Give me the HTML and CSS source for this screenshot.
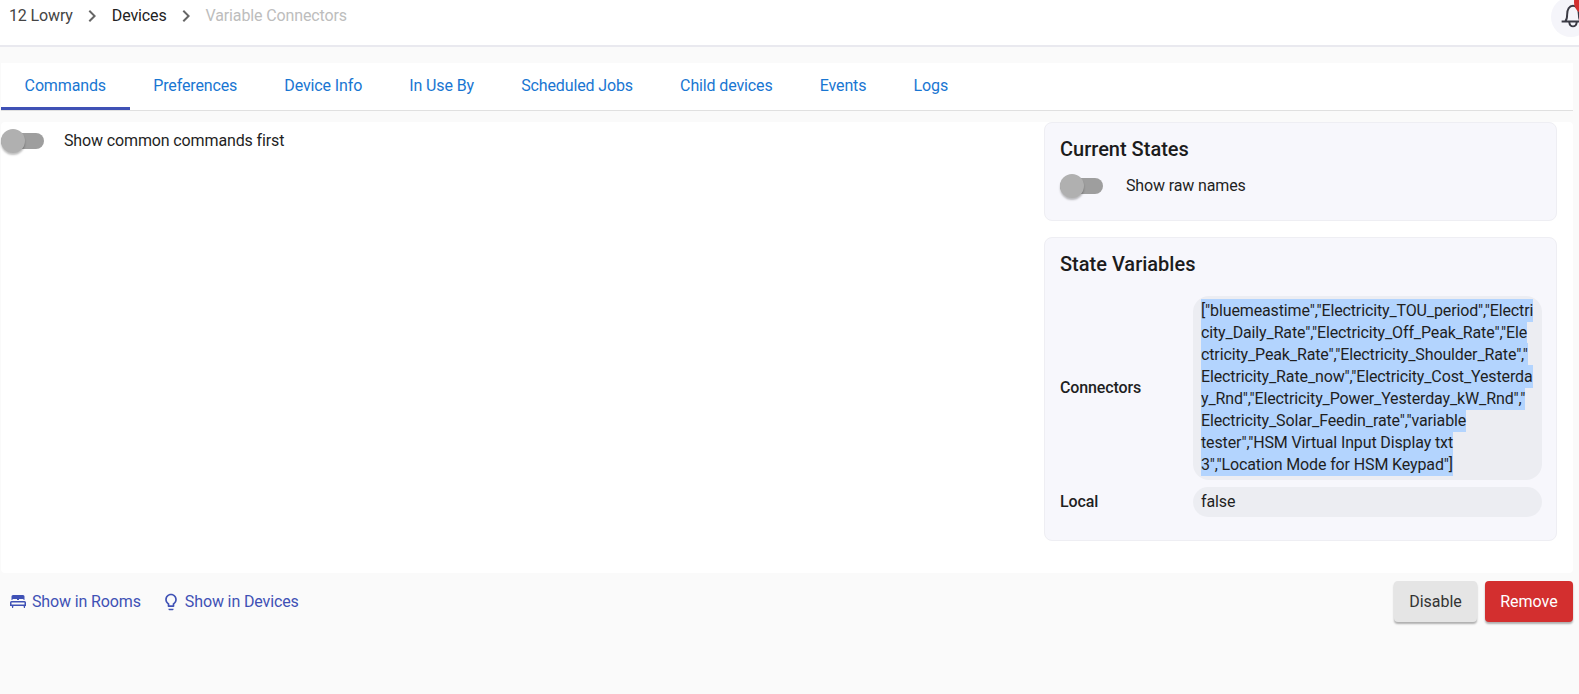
FILE: index.html
```html
<!DOCTYPE html>
<html lang="en">
<head>
<meta charset="utf-8">
<title>Variable Connectors</title>
<link rel="stylesheet" href="styles.css">
</head>
<body>
<header class="topbar">
  <nav class="crumbs">
    <span class="crumb-home">12 Lowry</span>
    <svg class="chev" viewBox="0 0 24 24"><path d="M10 6 8.59 7.41 13.17 12l-4.58 4.59L10 18l6-6z"/></svg>
    <span class="crumb-mid">Devices</span>
    <svg class="chev" viewBox="0 0 24 24"><path d="M10 6 8.59 7.41 13.17 12l-4.58 4.59L10 18l6-6z"/></svg>
    <span class="crumb-now">Variable Connectors</span>
  </nav>
  <div class="bell-wrap">
    <svg class="bell" viewBox="0 0 24 24"><path d="M5 17.500c1.600-1.600 1.600-3.500 1.600-6C6.600 7 8.500 3.500 12 3.500s5.400 3.500 5.400 8c0 2.500 0 4.400 1.600 6M1.500 18h21M8.500 18.500c.4 2.700 1.800 4 3.500 4s3.100-1.300 3.500-4"/></svg>
  </div>
  <span class="badge"></span>
</header>
<main class="page">
  <div class="tabs">
    <a class="tab tab-active">Commands</a>
    <a class="tab">Preferences</a>
    <a class="tab">Device Info</a>
    <a class="tab">In Use By</a>
    <a class="tab">Scheduled Jobs</a>
    <a class="tab">Child devices</a>
    <a class="tab">Events</a>
    <a class="tab">Logs</a>
  </div>
  <section class="panel">
    <div class="col-left">
      <label class="toggle-row">
        <span class="switch"><span class="knob"></span></span>
        <span>Show common commands first</span>
      </label>
    </div>
    <div class="col-right">
      <div class="card card-states">
        <h2>Current States</h2>
        <label class="toggle-row toggle-raw">
          <span class="switch"><span class="knob"></span></span>
          <span>Show raw names</span>
        </label>
      </div>
      <div class="card card-vars">
        <h2>State Variables</h2>
        <div class="vars">
          <div class="var-name">Connectors</div>
          <div class="var-value"><span class="selected">["bluemeastime","Electricity_TOU_period","Electricity_Daily_Rate","Electricity_Off_Peak_Rate","Electricity_Peak_Rate","Electricity_Shoulder_Rate","Electricity_Rate_now","Electricity_Cost_Yesterday_Rnd","Electricity_Power_Yesterday_kW_Rnd","<br>Electricity_Solar_Feedin_rate","variable tester","HSM Virtual Input Display txt 3","Location Mode for HSM Keypad"]</span></div>
          <div class="var-name">Local</div>
          <div class="var-value">false</div>
        </div>
      </div>
    </div>
  </section>
  <footer class="actions">
    <a class="link">
      <svg class="bed-icon" viewBox="0 0 16 13"><path d="M3 0h10a1.500 1.500 0 0 1 1.500 1.500V5h-1V4H9V5H7V4H2.500V5h-1V1.500A1.500 1.500 0 0 1 3 0z"/><path fill-rule="evenodd" d="M1.500 6h13A1.500 1.500 0 0 1 16 7.500V11h-.8l-.3 2h-1l-.3-2H3.400l-.3 2h-1l-.3-2H0V7.500A1.500 1.500 0 0 1 1.500 6zM1.500 7.500V9.500h13V7.500z"/></svg>
      Show in Rooms
    </a>
    <a class="link">
      <svg class="link-icon" viewBox="0 0 24 24"><path d="M9 21c0 .55.45 1 1 1h4c.55 0 1-.45 1-1v-1H9v1zm3-19C8.140 2 5 5.140 5 9c0 2.380 1.190 4.470 3 5.740V17c0 .55.45 1 1 1h6c.55 0 1-.45 1-1v-2.260c1.810-1.270 3-3.360 3-5.740 0-3.860-3.140-7-7-7zm2.850 11.100-.85.6V16h-4v-2.300l-.85-.6C7.800 12.160 7 10.630 7 9c0-2.760 2.240-5 5-5s5 2.240 5 5c0 1.630-.8 3.160-2.150 4.100z"/></svg>
      Show in Devices
    </a>
    <div class="buttons">
      <button class="btn btn-grey">Disable</button>
      <button class="btn btn-red">Remove</button>
    </div>
  </footer>
</main>
</body>
</html>
```
FILE: styles.css
```css
* { box-sizing: border-box; }
html, body { margin: 0; height: 100%; }
body {
  background: #fafafa;
  font-family: Roboto, "Liberation Sans", sans-serif;
  font-size: 16px;
  line-height: 22px;
  letter-spacing: -0.13px;
  color: #1f1f1f;
  overflow: hidden;
}
.topbar {
  height: 47px;
  background: #fff;
  border-bottom: 2px solid #e9e9ef;
  display: flex;
  justify-content: space-between;
  position: relative;
  overflow: hidden;
}
.crumbs { display: flex; align-items: center; height: 32px; padding-left: 9px; }
.crumb-home { color: #444; }
.crumb-mid { color: #222; }
.crumb-now { color: #bdbdbd; }
.chev { width: 24px; height: 24px; fill: #666; margin: 0 7.500px; }
.bell-wrap {
  position: absolute;
  left: 1551px;
  top: -3px;
  width: 40px;
  height: 40px;
  border-radius: 50%;
  background: #f5f5fa;
}
.bell { position: absolute; left: 9px; top: 5px; width: 26px; height: 26px; fill: none; stroke: #3a3a44; stroke-width: 1.800; }
.badge { position: absolute; left: 1574px; top: -11px; width: 26px; height: 26px; border-radius: 50%; background: #d32f2f; }
.page { padding: 16px 6px 0 1px; }
.tabs {
  display: flex;
  background: #fff;
  height: 48px;
  border-bottom: 1px solid #e0e0e0;
  align-items: stretch;
  margin-bottom: 11px;
}
.tab {
  display: flex;
  align-items: center;
  padding: 2px 23.600px 0;
  color: #1976d2;
  border-bottom: 3px solid transparent;
  height: 47px;
}
.tab-active { border-bottom-color: #3f51b5; }
.panel {
  display: flex;
  background: #fff;
  height: 451px;
  border-radius: 4px;
}
.col-left { flex: 1; }
.col-right { width: 513px; margin-right: 16px; display: flex; flex-direction: column; gap: 16px; }
.toggle-row { display: flex; align-items: center; gap: 20px; height: 38px; }
.switch { width: 43px; height: 16px; position: relative; background: #9e9e9e; border-radius: 8px; display: block; }
.knob {
  position: absolute;
  left: 0;
  top: -4px;
  width: 24px;
  height: 24px;
  border-radius: 50%;
  background: #b0b0b0;
  box-shadow: 0 2px 2px rgba(0,0,0,.25);
}
.card {
  background: #f7f7fc;
  border: 1px solid #eeeef3;
  border-radius: 8px;
  padding: 12px 14px 0 15px;
}
.card h2 { margin: 0; font-size: 20px; font-weight: 500; line-height: 28px; color: #1c1c1c; letter-spacing: 0; }
.card-states { height: 99px; }
.card-vars { height: 304px; }
.toggle-raw { margin-top: 8px; gap: 23px; height: 30px; }
.vars {
  display: grid;
  grid-template-columns: 133px 1fr;
  row-gap: 7px;
  align-items: center;
  margin-top: 18px;
}
.var-name { font-weight: 500; }
.var-value {
  background: #ecedf2;
  border-radius: 16px;
  padding: 4px 8px;
  overflow-wrap: anywhere;
}
.selected { background: #b3d4fe; padding: 1.600px 0; }
.actions { display: flex; align-items: center; height: 41px; margin-top: 8px; padding-left: 7px; }
.link { display: flex; align-items: center; gap: 4px; color: #3f51b5; margin-right: 20px; }
.link-icon { width: 20px; height: 20px; fill: #3f51b5; }
.bed-icon { width: 16px; height: 13px; fill: #3f51b5; margin: 0 2px 0 2px; }
.buttons { margin-left: auto; display: flex; gap: 8px; }
.btn {
  height: 41px;
  border: 0;
  border-radius: 4px;
  font: 400 16px Roboto, sans-serif;
  box-shadow: 0 2px 2px rgba(0,0,0,.3);
}
.btn-grey { width: 83px; background: #e5e5e5; color: #333; }
.btn-red { width: 88px; background: #d32f2f; color: #fff; }
```
